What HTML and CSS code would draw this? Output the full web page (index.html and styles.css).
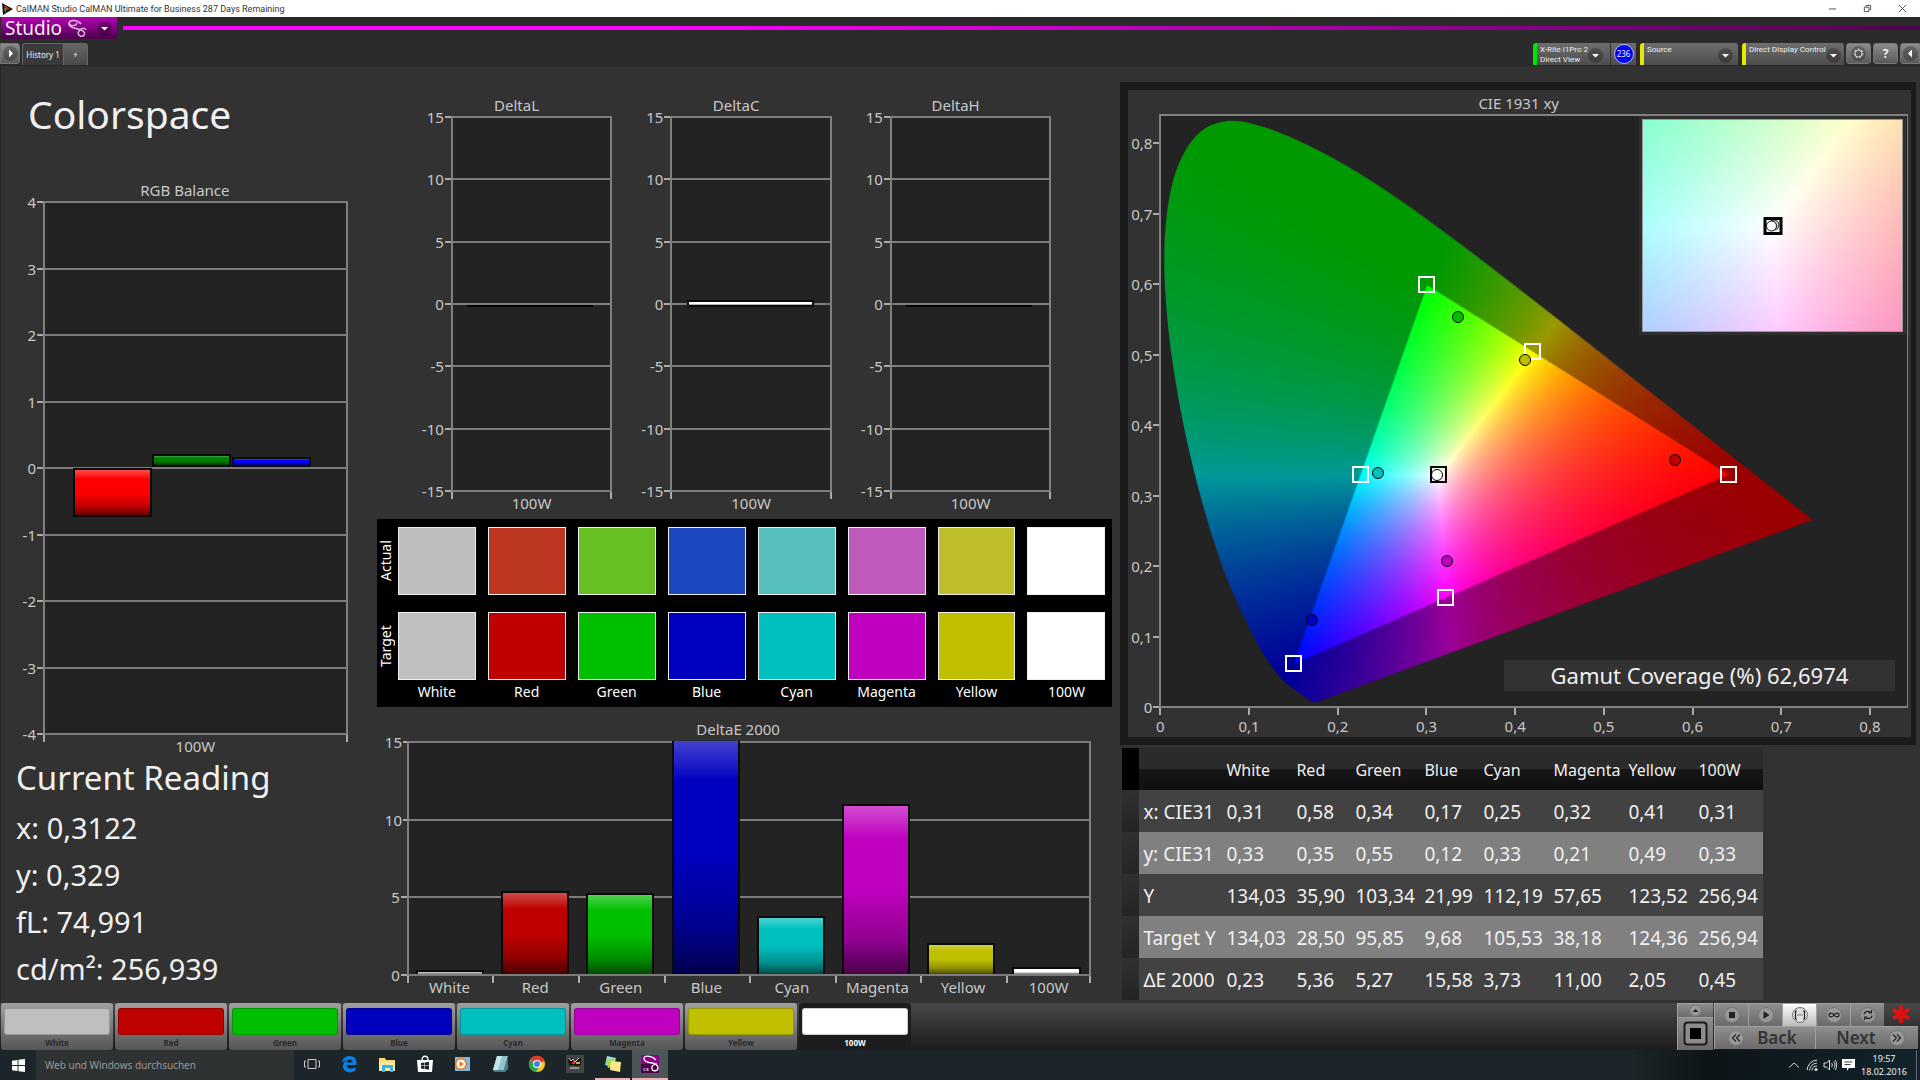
FILE: index.html
```html
<!DOCTYPE html>
<html lang="en">
<head>
<meta charset="utf-8">
<title>CalMAN Studio</title>
<link rel="stylesheet" href="styles.css">
</head>
<body>
<header class="titlebar">
  <svg class="app-icon" viewBox="0 0 12 12"><path d="M1 0 12 6 2 12Z" fill="#111"/><path d="M3 2 9 6 4 7Z" fill="#c22"/><path d="M3 5 6 6 4 10Z" fill="#2a2"/></svg>
  <span class="titlebar-text">CalMAN Studio CalMAN Ultimate for Business 287 Days Remaining</span>
  <button class="win-btn" aria-label="Minimize"><svg viewBox="0 0 10 10"><path d="M1 5.500h8"/></svg></button>
  <button class="win-btn" aria-label="Restore"><svg viewBox="0 0 10 10"><path d="M1.500 3.500h5v5h-5zM3.500 3V1.500h5v5H7"/></svg></button>
  <button class="win-btn" aria-label="Close"><svg viewBox="0 0 10 10"><path d="M1 1l8 8M9 1l-8 8"/></svg></button>
</header>

<div class="brandbar">
  <button class="brand">Studio
    <svg class="brand-loop" viewBox="0 0 20 18"><path d="M14 5C11 1 3 0 2 4s5 5 9 6 8 3 6 6-8 0-5-4 6-3 7-1M2 4c2 4 7 3 8 0" /></svg>
    <svg class="round-icon brand-caret" viewBox="0 0 15 15"><circle cx="7.500" cy="7.500" r="7.500"/><path d="M4 6h7l-3.500 3.500z"/></svg>
  </button>
  <div class="brand-line"></div>
</div>

<nav class="tabs">
  <button class="square-btn square-first" aria-label="Expand"><svg class="round-icon" viewBox="0 0 15 15"><circle cx="7.500" cy="7.500" r="7.500"/><path d="M6 3.500v8l4-4z"/></svg></button>
  <button class="tab tab-active">History 1</button>
  <button class="tab tab-add">+</button>
  <div class="tabs-space"></div>
  <button class="device device-meter"><span class="device-name">X-Rite i1Pro 2<br>Direct View</span><svg class="round-icon" viewBox="0 0 15 15"><circle cx="7.500" cy="7.500" r="7.500"/><path d="M4 6h7l-3.500 3.500z"/></svg></button>
  <div class="device-count"><span>236</span></div>
  <button class="device device-source"><span class="device-name">Source</span><svg class="round-icon" viewBox="0 0 15 15"><circle cx="7.500" cy="7.500" r="7.500"/><path d="M4 6h7l-3.500 3.500z"/></svg></button>
  <button class="device device-display"><span class="device-name">Direct Display Control</span><svg class="round-icon" viewBox="0 0 15 15"><circle cx="7.500" cy="7.500" r="7.500"/><path d="M4 6h7l-3.500 3.500z"/></svg></button>
  <button class="square-btn" aria-label="Settings"><svg class="round-icon" viewBox="0 0 15 15"><circle cx="7.500" cy="7.500" r="7.500"/><circle class="gear" cx="7.500" cy="7.500" r="3.500"/><circle class="gear-teeth" cx="7.500" cy="7.500" r="4.500"/></svg></button>
  <button class="square-btn" aria-label="Help"><span class="help-mark">?</span></button>
  <button class="square-btn square-last" aria-label="Collapse"><svg class="round-icon" viewBox="0 0 15 15"><circle cx="7.500" cy="7.500" r="7.500"/><path d="M9 3.500v8l-4-4z"/></svg></button>
</nav>

<main class="workspace">
  <section class="col-left">
    <h1>Colorspace</h1>
    <figure class="chart chart-rgb">
      <figcaption>RGB Balance</figcaption>
      <ul class="y-axis"><li>4</li><li>3</li><li>2</li><li>1</li><li>0</li><li>-1</li><li>-2</li><li>-3</li><li>-4</li></ul>
      <div class="plot">
        <ul class="lines"><li></li><li></li><li></li><li></li><li></li><li></li><li></li><li></li><li></li></ul>
        <div class="bars">
          <span class="bar" style="left:9.3%;width:26.3%;top:50.1%;height:9.1%;--c:#ff0000"></span>
          <span class="bar" style="left:35.7%;width:26.3%;top:47.4%;height:2.6%;--c:#008000"></span>
          <span class="bar" style="left:62.2%;width:26.3%;top:48%;height:2%;--c:#0000ff"></span>
        </div>
      </div>
      <ul class="x-axis"><li>100W</li></ul>
    </figure>
    <h2>Current Reading</h2>
    <ul class="readings"><li>x: 0,3122</li><li>y: 0,329</li><li>fL: 74,991</li><li>cd/m²: 256,939</li></ul>
  </section>

  <section class="col-mid">
    <div class="deltas">
      <figure class="chart chart-delta">
        <figcaption>DeltaL</figcaption>
        <ul class="y-axis"><li>15</li><li>10</li><li>5</li><li>0</li><li>-5</li><li>-10</li><li>-15</li></ul>
        <div class="plot">
          <ul class="lines"><li></li><li></li><li></li><li></li><li></li><li></li><li></li></ul>
          <div class="bars"><span class="bar-flat" style="left:9%;width:80%;top:50.4%"></span></div>
        </div>
        <ul class="x-axis"><li>100W</li></ul>
      </figure>
      <figure class="chart chart-delta">
        <figcaption>DeltaC</figcaption>
        <ul class="y-axis"><li>15</li><li>10</li><li>5</li><li>0</li><li>-5</li><li>-10</li><li>-15</li></ul>
        <div class="plot">
          <ul class="lines"><li></li><li></li><li></li><li></li><li></li><li></li><li></li></ul>
          <div class="bars"><span class="bar" style="left:9%;width:81%;top:49%;height:1.9%;--c:#ffffff"></span></div>
        </div>
        <ul class="x-axis"><li>100W</li></ul>
      </figure>
      <figure class="chart chart-delta">
        <figcaption>DeltaH</figcaption>
        <ul class="y-axis"><li>15</li><li>10</li><li>5</li><li>0</li><li>-5</li><li>-10</li><li>-15</li></ul>
        <div class="plot">
          <ul class="lines"><li></li><li></li><li></li><li></li><li></li><li></li><li></li></ul>
          <div class="bars"><span class="bar-flat" style="left:9%;width:80%;top:50.4%"></span></div>
        </div>
        <ul class="x-axis"><li>100W</li></ul>
      </figure>
    </div>

    <div class="swatches">
      <span class="swatch-row-name">Actual</span>
      <span class="swatch" style="background:#bebebe"></span><span class="swatch" style="background:#bd3621"></span><span class="swatch" style="background:#67bf24"></span><span class="swatch" style="background:#1c47bf"></span><span class="swatch" style="background:#56bfbe"></span><span class="swatch" style="background:#c059bc"></span><span class="swatch" style="background:#bdbe2a"></span><span class="swatch" style="background:#ffffff"></span>
      <span class="swatch-row-name">Target</span>
      <span class="swatch" style="background:#bfbfbf"></span><span class="swatch" style="background:#bf0000"></span><span class="swatch" style="background:#00bf00"></span><span class="swatch" style="background:#0000bf"></span><span class="swatch" style="background:#00bfbf"></span><span class="swatch" style="background:#bf00bf"></span><span class="swatch" style="background:#bfbf00"></span><span class="swatch" style="background:#ffffff"></span>
      <span></span>
      <span class="swatch-name">White</span><span class="swatch-name">Red</span><span class="swatch-name">Green</span><span class="swatch-name">Blue</span><span class="swatch-name">Cyan</span><span class="swatch-name">Magenta</span><span class="swatch-name">Yellow</span><span class="swatch-name">100W</span>
    </div>

    <figure class="chart chart-de">
      <figcaption>DeltaE 2000</figcaption>
      <ul class="y-axis"><li>15</li><li>10</li><li>5</li><li>0</li></ul>
      <div class="plot">
        <ul class="lines"><li></li><li></li><li></li><li></li></ul>
        <div class="bars">
          <span class="bar" style="left:1%;width:10%;height:1.6%;--c:#bfbfbf"></span>
          <span class="bar" style="left:13.6%;width:10%;height:35.6%;--c:#bf0000"></span>
          <span class="bar" style="left:26.1%;width:10%;height:34.8%;--c:#00bf00"></span>
          <span class="bar" style="left:38.7%;width:10%;height:104%;--c:#0000bf"></span>
          <span class="bar" style="left:51.1%;width:10%;height:24.8%;--c:#00bfbf"></span>
          <span class="bar" style="left:63.7%;width:10%;height:72.8%;--c:#bf00bf"></span>
          <span class="bar" style="left:76.1%;width:10%;height:13.4%;--c:#bfbf00"></span>
          <span class="bar" style="left:88.7%;width:10%;height:3%;--c:#ffffff"></span>
        </div>
      </div>
      <ul class="x-axis"><li>White</li><li>Red</li><li>Green</li><li>Blue</li><li>Cyan</li><li>Magenta</li><li>Yellow</li><li>100W</li></ul>
    </figure>
  </section>

  <section class="col-right">
    <div class="cie-panel">
      <figure class="chart chart-cie">
        <figcaption>CIE 1931 xy</figcaption>
        <ul class="y-axis"><li>0,8</li><li>0,7</li><li>0,6</li><li>0,5</li><li>0,4</li><li>0,3</li><li>0,2</li><li>0,1</li><li>0</li></ul>
        <div class="plot" id="cie-plot">
          <canvas id="cie" width="748" height="592"></canvas>
          <div class="inset">
            <canvas id="inset" width="260" height="212"></canvas>
            <svg class="inset-mark" viewBox="0 0 20 20"><path d="M2 2.500h16v15H2z" fill="none" stroke="#000" stroke-width="3"/><circle cx="11" cy="9" r="5" fill="#ccc" stroke="#222"/><circle cx="8.500" cy="10" r="5" fill="#fff" stroke="#111"/></svg>
          </div>
          <div class="gamut">Gamut Coverage (%) 62,6974</div>
        </div>
        <ul class="x-axis"><li>0</li><li>0,1</li><li>0,2</li><li>0,3</li><li>0,4</li><li>0,5</li><li>0,6</li><li>0,7</li><li>0,8</li></ul>
      </figure>
    </div>

    <table class="data">
      <colgroup><col class="c-edge"><col class="c-label"><col class="c-w"><col class="c-r"><col class="c-g"><col class="c-b"><col class="c-c"><col class="c-m"><col class="c-y"><col class="c-hw"></colgroup>
      <thead><tr><th></th><th></th><th>White</th><th>Red</th><th>Green</th><th>Blue</th><th>Cyan</th><th>Magenta</th><th>Yellow</th><th>100W</th></tr></thead>
      <tbody>
        <tr><td></td><th>x: CIE31</th><td>0,31</td><td>0,58</td><td>0,34</td><td>0,17</td><td>0,25</td><td>0,32</td><td>0,41</td><td>0,31</td></tr>
        <tr><td></td><th>y: CIE31</th><td>0,33</td><td>0,35</td><td>0,55</td><td>0,12</td><td>0,33</td><td>0,21</td><td>0,49</td><td>0,33</td></tr>
        <tr><td></td><th>Y</th><td>134,03</td><td>35,90</td><td>103,34</td><td>21,99</td><td>112,19</td><td>57,65</td><td>123,52</td><td>256,94</td></tr>
        <tr><td></td><th>Target Y</th><td>134,03</td><td>28,50</td><td>95,85</td><td>9,68</td><td>105,53</td><td>38,18</td><td>124,36</td><td>256,94</td></tr>
        <tr><td></td><th>ΔE 2000</th><td>0,23</td><td>5,36</td><td>5,27</td><td>15,58</td><td>3,73</td><td>11,00</td><td>2,05</td><td>0,45</td></tr>
      </tbody>
    </table>
  </section>
</main>

<footer class="controls">
  <div class="patches">
    <button class="patch"><i style="background:#bfbfbf"></i>White</button>
    <button class="patch"><i style="background:#bf0000"></i>Red</button>
    <button class="patch"><i style="background:#00bf00"></i>Green</button>
    <button class="patch"><i style="background:#0000bf"></i>Blue</button>
    <button class="patch"><i style="background:#00bfbf"></i>Cyan</button>
    <button class="patch"><i style="background:#bf00bf"></i>Magenta</button>
    <button class="patch"><i style="background:#bfbf00"></i>Yellow</button>
    <button class="patch patch-active"><i style="background:#ffffff"></i>100W</button>
  </div>
  <div class="pattern">
    <button class="ctl pattern-up" aria-label="Expand pattern"><svg viewBox="0 0 14 14"><circle class="disc" cx="7" cy="7" r="6"/><path d="M4 8.500h6L7 5z"/></svg></button>
    <button class="ctl pattern-box" aria-label="Pattern window"><svg viewBox="0 0 26 26"><rect x="1.500" y="1.500" width="22" height="22" rx="3" fill="#8c8c8c" stroke="#1c1c1c" stroke-width="2"/><path d="M7 7h11v11H7z" fill="#000"/></svg></button>
  </div>
  <div class="transport">
    <div class="transport-row">
      <button class="ctl" aria-label="Stop"><svg viewBox="0 0 16 16"><circle class="disc" cx="8" cy="8" r="7.500"/><path d="M5 5h6v6H5z"/></svg></button>
      <button class="ctl" aria-label="Play"><svg viewBox="0 0 16 16"><circle class="disc" cx="8" cy="8" r="7.500"/><path d="M5.500 4v8l6-4z"/></svg></button>
      <button class="ctl ctl-on" aria-label="Read series"><svg viewBox="0 0 16 16"><circle class="disc" cx="8" cy="8" r="7.500"/><path class="ln" d="M5 4H3.500v8H5M11 4h1.500v8H11M5.500 8h1M7.500 8h1M9.500 8h1"/></svg></button>
      <button class="ctl" aria-label="Read continuously"><svg viewBox="0 0 16 16"><circle class="disc" cx="8" cy="8" r="7.500"/><path class="ln" d="M8 8C6.500 5.500 3 5.500 3 8s3.500 2.500 5 0 5-2.500 5 0-3.500 2.500-5 0z"/></svg></button>
      <button class="ctl" aria-label="Repeat"><svg viewBox="0 0 16 16"><circle class="disc" cx="8" cy="8" r="7.500"/><path class="ln" d="M4 7.500C4 4.500 8 3.500 10.500 5.500M12 8.500c0 3-4 4-6.500 2M11.500 3v3h-3M4.500 13v-3h3"/></svg></button>
      <svg class="asterisk" viewBox="0 0 20 20"><path d="M10 1v18M2 5.500l16 9M18 5.500l-16 9"/></svg>
    </div>
    <div class="transport-row transport-nav">
      <button class="ctl nav-btn"><svg viewBox="0 0 16 16"><circle class="disc" cx="8" cy="8" r="7.500"/><path class="ln" d="M8 4.500 4.500 8 8 11.500M12 4.500 8.500 8l3.500 3.500"/></svg>Back</button>
      <button class="ctl nav-btn nav-next">Next<svg viewBox="0 0 16 16"><circle class="disc" cx="8" cy="8" r="7.500"/><path class="ln" d="M4 4.500 7.500 8 4 11.500M8 4.500 11.500 8 8 11.500"/></svg></button>
    </div>
  </div>
</footer>

<div class="taskbar">
  <button class="start" aria-label="Start"><svg viewBox="0 0 14 14"><path d="M0 2l6-1v5.500H0zM7 .9L14 0v6.500H7zM0 7.500h6V13l-6-1zM7 7.500h7V14l-7-.9z" fill="#fff"/></svg></button>
  <input class="search" type="text" aria-label="Search" placeholder="Web und Windows durchsuchen">
  <div class="apps">
    <button class="app" aria-label="Task view"><svg viewBox="0 0 18 18"><path d="M5 4.500h8v9H5zM3 6H1.500v6H3M15 6h1.500v6H15" fill="none" stroke="#ccc"/></svg></button>
    <button class="app" aria-label="Edge"><svg viewBox="0 0 18 18"><path d="M1.500 8C2.500 3.500 5.500 1 9.500 1c4.500 0 7 3 7 7v2H6.500c.2 4 5.500 4.500 9 2.300v3.400C9 19 2.500 16.500 3 10.500c.2-2.500 1.700-4.300 4-5.300-3 .3-4.600 1.500-5.500 2.800zM6.700 7.500h5.800c0-4-5.300-3.800-5.800 0z" fill="#0c7fe0"/></svg></button>
    <button class="app" aria-label="Explorer"><svg viewBox="0 0 18 18"><path d="M1 3h6l1 2h9v11H1z" fill="#fadb6b"/><path d="M1 7h16v9H1z" fill="#fce9a0"/><path d="M4 10h11v7h-3v-4H7v4H4z" fill="#35b5e8"/></svg></button>
    <button class="app" aria-label="Store"><svg viewBox="0 0 18 18"><path d="M6 5c0-5 6-5 6 0" fill="none" stroke="#fff" stroke-width="1.300"/><path d="M1 5h16l-1 12H2z" fill="#fff"/><path d="M5 8l3.500-.5v3H5zM9 7.400l4-.6v3.700H9zM5 11h3.500v3L5 13.600zM9 11h4v3.700L9 14z" fill="#1c2328"/></svg></button>
    <button class="app" aria-label="Media player"><svg viewBox="0 0 18 18"><path d="M2 2h15v14H2z" fill="#7fb8da"/><circle cx="8" cy="9" r="6" fill="#f07818"/><circle cx="8" cy="9" r="4.500" fill="#fff"/><path d="M6.500 6v6l4.500-3z" fill="#f07818"/></svg></button>
    <button class="app" aria-label="Notepad"><svg viewBox="0 0 18 18"><path d="M6 1h11l-4 14H2z" fill="#8cc4cf"/><path d="M6 1h5l-4 14H2z" fill="#c6e4e8"/><path d="M2 15h11l4-12v11l-3 3H3z" fill="#4a7d8c"/></svg></button>
    <button class="app" aria-label="Chrome"><svg viewBox="0 0 18 18"><circle cx="9" cy="9" r="8" fill="#f8c81c"/><path d="M9 9 2 5a8 8 0 0 1 14.500 1z" fill="#e03a2c"/><path d="M2 5a8 8 0 0 0 6 12l3.500-5.500z" fill="#2ca04a"/><path d="M9 5.500h7.300L9 9z" fill="#e03a2c"/><circle cx="9" cy="9" r="4" fill="#fff"/><circle cx="9" cy="9" r="3" fill="#3f7fe8"/></svg></button>
    <button class="app" aria-label="Media tool"><svg viewBox="0 0 18 18"><path d="M0 0h18v18H0z" fill="#454545"/><path d="M2 4l4-1 3 2 6-2v7l-4 1-5-1-3 1z" fill="#111"/><path d="M3 3l2 3 2-2 2 3 4-4M4 13h9" stroke="#ddd" fill="none"/><path d="M6 8h3" stroke="#d33" stroke-width="2"/><path d="M10 8h4" stroke="#c8b040" stroke-width="2"/></svg></button>
    <button class="app app-open" aria-label="Sticky notes"><svg viewBox="0 0 18 18"><path d="M3 1l9 2-2 9-9-2z" fill="#9adcf0"/><path d="M2 5l8-2 2 8-8 2z" fill="#a8d84c"/><path d="M7 6l10 1-1 10-10-2z" fill="#fbe88c"/></svg></button>
    <button class="app app-open app-current" aria-label="CalMAN"><svg viewBox="0 0 18 18"><path d="M0 0h18v18H0z" fill="#8c008c"/><path d="M0 9h18v9H0z" fill="#4c004c"/><path d="M15 5C12 1 4 0 3 3s5 5 8 5 6 2 6 5-5 4-6 1 2-5 5-5" fill="none" stroke="#fff" stroke-width="1.300"/><text x="2" y="16" font-size="6" fill="#fff">cs</text></svg></button>
  </div>
  <div class="tray">
    <svg viewBox="0 0 14 14"><path d="M2 9.500 7 5l5 4.500" class="tr"/></svg>
    <svg viewBox="0 0 14 14"><path d="M2 12A11 11 0 0 1 12 2M4.500 12.500A8 8 0 0 1 12 5M7 12.500A5 5 0 0 1 12 8" class="tr"/><circle cx="11" cy="11.500" r="1.500" fill="#ddd"/></svg>
    <svg viewBox="0 0 14 14"><path d="M1 5h2.500L6.500 2v10L3.500 9H1zM8.500 5c1 1 1 3 0 4M10.500 3.500c2 2 2 5 0 7M12.200 2c2 3 2 7 0 10" class="tr"/></svg>
    <svg viewBox="0 0 14 14"><path d="M1 1h13v9H8l-2 3v-3H1z" fill="#fff"/><path d="M3.500 4h8M3.500 6.500h6" stroke="#444"/></svg>
    <time class="clock">19:57<br>18.02.2016</time>
  </div>
</div>
<script src="cie.js"></script>
</body>
</html>
```
FILE: styles.css
```css
* { box-sizing: border-box; }
html { height: 100%; }
body {
  margin: 0;
  min-height: 100vh;
  display: flex;
  flex-direction: column;
  background: #323232;
  color: #f0f0f0;
  font-family: "Noto Sans", "Open Sans", sans-serif;
}
ul { list-style: none; margin: 0; padding: 0; }
figure { margin: 0; }
button { font-family: inherit; border: 0; padding: 0; margin: 0; color: inherit; background: none; }

/* window title */
.titlebar { display: flex; align-items: center; height: 17px; background: #fff; color: #333; }
.app-icon { width: 12px; height: 12px; margin: 0 3px 0 1px; }
.titlebar-text { flex: 1; font-family: Roboto, sans-serif; font-size: 9px; line-height: 16px; }
.win-btn { width: 35px; height: 16px; display: grid; place-items: center; }
.win-btn svg { width: 9px; height: 9px; fill: none; stroke: #444; }

/* brand strip */
.brandbar { display: flex; height: 23px; background: #2b2b2b; padding-left: 1px; }
.brand {
  display: flex; align-items: center; gap: 5px; width: 116px; height: 22px; padding-left: 4px;
  background: linear-gradient(#b400b4, #7a007a 55%, #4a004a); color: #eee;
  font-size: 19px; line-height: 20px; border-radius: 0 0 2px 2px;
}
.brand-loop { width: 20px; height: 18px; flex: none; fill: none; stroke: #d8b8d8; stroke-width: 1.5; }
.round-icon { width: 15px; height: 15px; flex: none; }
.round-icon circle { fill: rgba(0, 0, 0, .25); }
.round-icon path { fill: #fff; }
.round-icon .gear { fill: none; stroke: #ddd; stroke-width: 1; }
.round-icon .gear-teeth { fill: none; stroke: #ddd; stroke-width: 1; stroke-dasharray: 2 2; }
.brand-caret { margin-left: 5px; }
.brand-line { flex: 1; height: 4px; margin: 9px 0 0 6px; background: linear-gradient(90deg, #ff00ff, #f0f 30%, #500050); }

/* tabs and devices */
.tabs { display: flex; height: 26px; padding-top: 3px; background: #2b2b2b; border-bottom: 1px solid #262626; font-size: 8px; }
.square-btn { width: 25px; height: 21px; margin-left: 2px; display: grid; place-items: center; border-radius: 3px; background: linear-gradient(#8c8c8c, #5a5a5a); border: 1px solid #777; }
.square-first { width: 20px; margin: 0 2px 0 0; border-radius: 0 3px 3px 0; }
.square-last { width: 20px; border-radius: 3px 0 0 3px; }
.help-mark { font-size: 12px; font-weight: 700; line-height: 14px; }
.tab { border-radius: 3px 3px 0 0; border: 1px solid #666; border-bottom: 0; font-size: 8px; }
.tab-active { width: 41px; background: #3a3a3a; border-right: 0; border-radius: 3px 0 0 0; }
.tab-add { width: 25px; background: linear-gradient(#666, #4a4a4a); border-radius: 0 3px 0 0; }
.tabs-space { flex: 1; }
.device { display: flex; align-items: flex-start; justify-content: space-between; padding: 2px 5px 0 3px; border-left: 4px solid #e6e600; background: linear-gradient(#6e6e6e, #4c4c4c); text-align: left; border-radius: 3px 3px 0 0; font-family: Roboto, sans-serif; }
.device-name { font-size: 8px; line-height: 10px; white-space: nowrap; }
.device .round-icon { margin-top: 3px; }
.device-meter { width: 77px; padding-right: 8px; border-left-color: #00e600; border-radius: 3px 0 0 0; }
.device-count { width: 26px; display: grid; place-items: center; background: linear-gradient(#6e6e6e, #4c4c4c); border-left: 1px solid #333; }
.device-count span { width: 20px; height: 20px; border-radius: 50%; border: 1px solid #bbf; background: #0000ff; font-size: 8px; line-height: 18px; text-align: center; }
.device-source { width: 98px; margin-left: 4px; }
.device-display { width: 102px; margin-left: 4px; }

/* workspace */
.workspace { flex: 1; display: grid; grid-template-columns: 376fr 744fr 800fr; border-left: 1px solid #262626; }
.col-left, .col-mid, .col-right { display: flex; flex-direction: column; min-width: 0; }
.col-left { padding: 20px 29px 11px 15px; }
h1 { margin: 0 0 37px 12px; font-size: 39px; line-height: 56px; font-weight: 400; }
h2 { margin: 0 0 5px; font-size: 33px; line-height: 42px; font-weight: 400; }
.readings { font-size: 29px; line-height: 47px; }

/* charts */
.chart { display: grid; color: #c8c8c8; font-size: 15px; }
.chart figcaption { grid-column: 1 / 3; text-align: center; line-height: 20px; }
.y-axis { grid-column: 1; display: flex; flex-direction: column; justify-content: space-between; }
.y-axis li { display: flex; align-items: center; justify-content: flex-end; height: 2px; line-height: 20px; }
.y-axis li::after { content: ""; width: 6px; height: 2px; margin-left: 1px; background: #aaa; }
.plot { position: relative; grid-column: 2; background: #232323; border: solid #808080; border-width: 0 2px; }
.lines { display: flex; flex-direction: column; justify-content: space-between; height: 100%; }
.lines li { height: 2px; background: #7c7c7c; }
.bars { position: absolute; inset: 0 0 1px; overflow: hidden; }
.bar {
  position: absolute; border: 2px solid #0a0a0a;
  background: linear-gradient(rgba(255,255,255,.3), rgba(255,255,255,0) 20%, rgba(0,0,0,0) 50%, rgba(0,0,0,.25) 80%, rgba(0,0,0,.6)) var(--c);
}
.bar-flat { position: absolute; height: 2px; background: #000; }
.x-axis { grid-column: 2; display: flex; line-height: 22px; }
.x-axis li { position: relative; flex: 1; text-align: center; }
.x-axis li::before, .x-axis li:last-child::after { content: ""; position: absolute; left: 0; top: 0; width: 2px; height: 7px; background: #aaa; }
.x-axis li:last-child::after { left: auto; right: 0; }
.chart-rgb { flex: 1; grid-template: 22px 1fr 22px / 21px 1fr; margin-left: 6px; }
.chart-rgb figcaption { line-height: 22px; }

.col-mid { padding: 29px 8px 7px 0; }
.deltas { flex: 420; display: grid; grid-template-columns: repeat(3, 1fr); gap: 28px; padding: 0 61px 0 44px; }
.chart-delta { grid-template: 21px 1fr 23px / 30px 1fr; }
.swatches {
  display: grid; grid-template-columns: 9px repeat(8, 1fr); grid-template-rows: 68px 68px 24px;
  gap: 17px 12px; height: 188px; margin: 4px 0 12px; padding: 8px 7px 0 0; background: #000;
}
.swatch { border: 1px solid #eee; }
.swatch-name { margin-top: -17px; text-align: center; font-size: 14px; line-height: 24px; color: #fff; }
.swatch-row-name { writing-mode: vertical-rl; transform: rotate(180deg); text-align: center; font-size: 14px; line-height: 18px; color: #fff; }
.chart-de { flex: 277; grid-template: 22px 1fr 20px / 22px 1fr; margin: 0 21px 0 8px; }
.chart-de .bars { bottom: 2px; }
.chart-de .bar { bottom: 0; border-bottom: 0; }

.col-right { padding: 16px 4px 3px 0; }
.cie-panel { flex: 1; display: flex; border: 8px solid #1b1b1b; border-right-width: 5px; background: #323232; }
.chart-cie { flex: 1; grid-template: 24px 1fr 29px / 30px 1fr; padding: 0 3px 0 1px; }
.chart-cie figcaption { line-height: 26px; }
.chart-cie .y-axis { padding-top: 28px; }
.chart-cie .x-axis { padding: 8px 37px 0 0; justify-content: space-between; line-height: 20px; }
.chart-cie .x-axis li { flex: none; width: 2px; display: flex; justify-content: center; }
.chart-cie .x-axis li::before, .chart-cie .x-axis li:last-child::after { top: -8px; right: auto; left: 0; }
.chart-cie .plot { border: 2px solid #808080; border-width: 2px 1px 2px 2px; }
.chart-cie canvas { position: absolute; left: 0; top: 0; width: 100%; height: 100%; }
.mark { position: absolute; width: 17px; height: 17px; margin: -8px -8px -8px -9px; border: 2px solid #fff; }
.mark-black { border-color: #000; }
.dot { position: absolute; width: 12px; height: 12px; margin: -6px -6px -6px -7px; border: 1px solid #000; border-radius: 50%; }
.inset { position: absolute; right: 1px; top: 0; width: 35.8%; height: 37.2%; border: 3px solid #2e2e2e; }
.inset canvas { border: 1px solid #999; }
.inset-mark { position: absolute; left: 50%; top: 50%; width: 20px; height: 20px; margin: -10px; }
.gamut { position: absolute; right: 12px; bottom: 15px; width: 391px; background: #323232; color: #f0f0f0; font-size: 22px; line-height: 31px; text-align: center; }

.data { width: 80.5%; margin: 3px 0 0 2px; border-collapse: collapse; table-layout: fixed; font-size: 19px; }
.data th, .data td { padding: 2px 0 0; text-align: left; font-weight: 400; height: 42px; line-height: 38px; white-space: nowrap; }
.data thead th { font-size: 16px; background: linear-gradient(#2b2b2b 50%, #161616 50%, #101010); }
.data thead th:first-child { background: #000; }
.data tbody tr { background: #424242; }
.data tbody tr:nth-child(even) { background: #808080; }
.data tbody td:first-child { background: linear-gradient(#303030, #242424); }
.data tbody th, .data thead th:nth-child(2) { padding-left: 4px; }
.c-edge { width: 17px; } .c-label { width: 87px; } .c-w { width: 70px; } .c-r { width: 59px; } .c-g { width: 69px; }
.c-b { width: 59px; } .c-c { width: 70px; } .c-m { width: 75px; } .c-y { width: 70px; } .c-hw { width: 65px; }

/* bottom controls */
.controls { display: flex; height: 47px; padding-right: 2px; background: linear-gradient(#484848, #1c1c1c); color: #222; }
.patches { display: flex; flex: 1; gap: 2px; padding-left: 1px; }
.patch { display: flex; flex-direction: column; align-items: center; width: 112px; padding: 5px 3px 0; border-radius: 3px; background: linear-gradient(#a0a0a0, #555); font-size: 8px; font-weight: 700; line-height: 14px; color: #2a2a2a; }
.patch i { display: block; width: 100%; height: 27px; border-radius: 3px; border: 1px solid rgba(0, 0, 0, .2); margin-bottom: 1px; }
.patch-active { background: #1c1c1c; color: #fff; }
.ctl { background: linear-gradient(#8e8e8e, #6a6a6a); border: solid #a0a0a0; border-width: 1px 0 0 1px; display: flex; align-items: center; justify-content: center; color: #222; }
.ctl svg { width: 16px; height: 16px; fill: #222; flex: none; }
.ctl .disc { fill: #999; stroke: #777; }
.ctl .ln { fill: none; stroke: #222; stroke-width: 1.2; }
.ctl-on { background: linear-gradient(#fff, #bbb); }
.ctl-on .disc { fill: #ddd; }
.pattern { width: 36px; display: flex; flex-direction: column; margin-right: 1px; }
.pattern-up { height: 14px; }
.pattern-up svg { width: 13px; height: 13px; }
.pattern-box { flex: 1; }
.pattern-box svg { width: 26px; height: 26px; }
.transport { width: 204px; }
.transport-row { display: flex; height: 23px; }
.transport-row .ctl { width: 34px; }
.asterisk { width: 20px; height: 20px; margin: 1px 0 0 7px; fill: none; stroke: #e01010; stroke-width: 4; }
.transport-row .nav-btn { flex: 1; gap: 13px; padding-right: 5px; font-size: 17px; line-height: 20px; font-weight: 600; color: #333; }
.transport-row .nav-next { padding: 0 0 0 7px; }

/* taskbar */
.taskbar { display: flex; height: 30px; background: linear-gradient(90deg, #1c2529, #1c2529 85%, #0c1418 89%, #12242c); }
.start { width: 36px; display: grid; place-items: center; }
.start svg { width: 13px; height: 13px; }
.search { width: 258px; border: 0; padding: 0 0 0 9px; background: #2e3233; font: 10px "Noto Sans", sans-serif; color: #999; }
.search::placeholder { color: #999; opacity: 1; }
.apps { display: flex; gap: 2px; width: 374px; margin-right: auto; }
.app { flex: 1; display: grid; place-items: center; border-bottom: 2px solid transparent; }
.app svg { width: 18px; height: 18px; }
.app-open { border-bottom-color: #f0b0b8; }
.app-current { background: #4c5558; }
.tray { display: flex; align-items: center; gap: 4px; padding-right: 9px; border-right: 1px solid #667; margin-right: 3px; }
.tray svg { width: 14px; height: 14px; }
.tr { fill: none; stroke: #ddd; }
.clock { margin-left: 2px; font-size: 9px; line-height: 13px; text-align: center; }
```
FILE: cie.js
```js
// Chromaticity diagram: paints every pixel with the normalised RGB colour of its xy value.
const LOCUS = [
  [.1741,.005],[.1714,.0051],[.1644,.0109],[.1566,.0177],[.144,.0297],[.1355,.0399],[.1241,.0578],[.1096,.0868],
  [.0913,.1327],[.0687,.2007],[.0454,.295],[.0235,.4127],[.0082,.5384],[.0039,.6548],[.0139,.7502],[.0389,.812],
  [.0743,.8338],[.1142,.8262],[.1547,.8059],[.1929,.7816],[.2296,.7543],[.2658,.7243],[.3016,.6923],[.3373,.6589],
  [.3731,.6245],[.4087,.5896],[.4441,.5547],[.4788,.5202],[.5125,.4866],[.5752,.4242],[.627,.3725],[.6658,.334],
  [.6915,.3083],[.719,.2809],[.7347,.2653]
];
const RANGE = 0.841;

function colour(x, y) {
  const X = x / y, Z = (1 - x - y) / y;
  const c = [
    3.2406 * X - 1.5372 - 0.4986 * Z,
    -0.9689 * X + 1.8758 + 0.0415 * Z,
    0.0557 * X - 0.204 + 1.057 * Z
  ].map(v => Math.max(0, v));
  const m = Math.max(...c);
  return c.map(v => 255 * v / m);
}

function field(w, h, x0, x1, y0, y1, gain) {
  const cv = document.createElement('canvas');
  cv.width = w; cv.height = h;
  const ctx = cv.getContext('2d');
  const img = ctx.createImageData(w, h);
  for (let j = 0; j < h; j++) {
    for (let i = 0; i < w; i++) {
      const x = x0 + (x1 - x0) * i / w;
      const y = Math.max(0.002, y1 - (y1 - y0) * j / h);
      const c = colour(x, y), k = (j * w + i) * 4;
      img.data[k] = c[0] * gain; img.data[k + 1] = c[1] * gain; img.data[k + 2] = c[2] * gain; img.data[k + 3] = 255;
    }
  }
  ctx.putImageData(img, 0, 0);
  return cv;
}

const main = document.getElementById('cie');
const W = main.width, H = main.height;
const g = main.getContext('2d');
const px = p => [p[0] / RANGE * W, H - p[1] / RANGE * H];

function paint(trace, gain) {
  g.save();
  g.beginPath();
  trace();
  g.closePath();
  g.clip();
  g.drawImage(field(W, H, 0, RANGE, 0, RANGE, gain), 0, 0);
  g.restore();
}

// Catmull-Rom spline through the locus points
paint(() => {
  const p = LOCUS.map(px), n = p.length - 1;
  g.moveTo(...p[0]);
  for (let i = 0; i < n; i++) {
    const a = p[Math.max(0, i - 1)], b = p[i], c = p[i + 1], d = p[Math.min(n, i + 2)];
    g.bezierCurveTo(b[0] + (c[0] - a[0]) / 6, b[1] + (c[1] - a[1]) / 6,
      c[0] - (d[0] - b[0]) / 6, c[1] - (d[1] - b[1]) / 6, c[0], c[1]);
  }
}, 0.6);
paint(() => [[.64, .33], [.3, .6], [.15, .06]].map(px).forEach(p => g.lineTo(...p)), 1);

const inset = document.getElementById('inset');
inset.getContext('2d').drawImage(
  field(inset.width, inset.height, .3127 - .024, .3127 + .024, .329 - .0235, .329 + .0235, 1), 0, 0);

// Target squares and measured dots
const plot = document.getElementById('cie-plot');
function pin(cls, x, y, fill) {
  const el = document.createElement('span');
  el.className = cls;
  el.style.left = x / RANGE * 100 + '%';
  el.style.bottom = y / RANGE * 100 + '%';
  if (fill) el.style.background = fill;
  plot.append(el);
}
[[.64, .33], [.3, .6], [.15, .06], [.2246, .3287], [.3209, .1542], [.4193, .5053]].forEach(p => pin('mark', ...p));
pin('mark mark-black', .3127, .329);
[[.58, .35, '#bf0000'], [.336, .555, '#00bf00'], [.171, .122, '#0000bf'], [.2457, .332, '#00bfbf'],
 [.3235, .206, '#bf00bf'], [.411, .493, '#bfbf00'], [.3122, .329, '#ffffff']].forEach(p => pin('dot', ...p));
```
